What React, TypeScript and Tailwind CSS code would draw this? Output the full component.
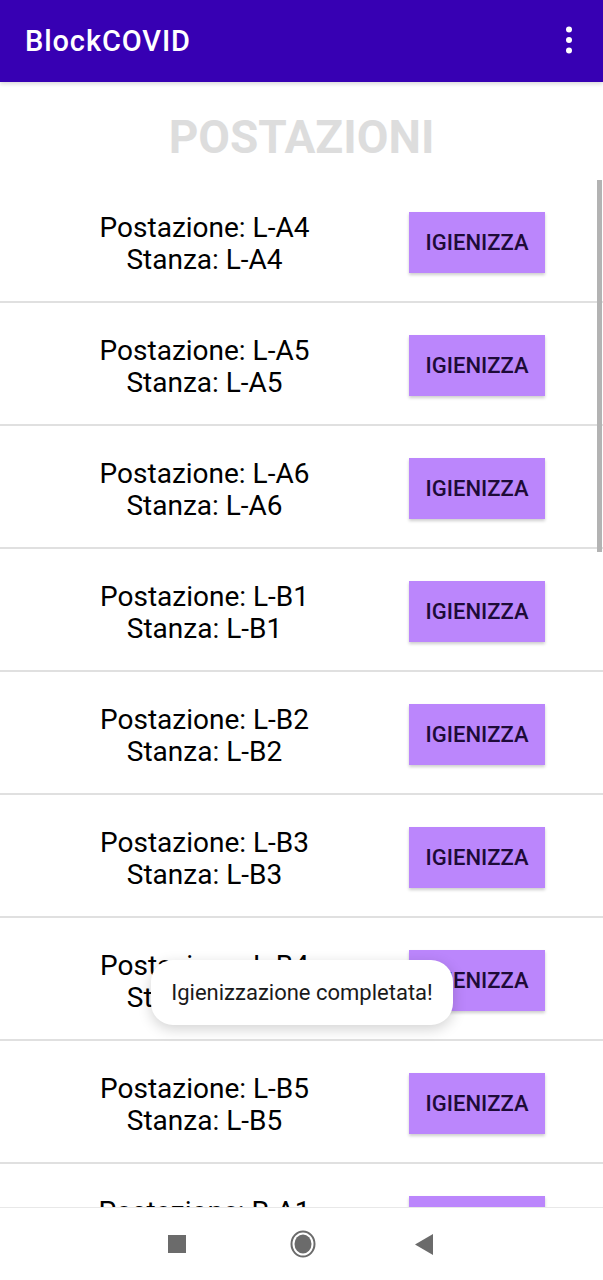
import React from "react";

const rows = ["L-A4", "L-A5", "L-A6", "L-B1", "L-B2", "L-B3", "L-B4", "L-B5", "R-A1"];

export default function App() {
  return (
    <div
      className="relative w-[603px] h-[1280px] bg-white overflow-hidden flex flex-col"
      style={{ fontFamily: "Roboto, 'Noto Sans', sans-serif" }}
    >
      <header className="h-[82px] shrink-0 bg-[#3700b3] flex items-center justify-between pl-[25px] pr-[30px] shadow-[0_2px_4px_rgba(0,0,0,0.15)] z-10">
        <span className="text-white text-[29px] font-medium tracking-[0.9px] leading-none">BlockCOVID</span>
        <svg width="8" height="28" viewBox="0 0 8 28" className="mt-[-2px]">
          <circle cx="4" cy="3.5" r="3" fill="white" />
          <circle cx="4" cy="14" r="3" fill="white" />
          <circle cx="4" cy="24.5" r="3" fill="white" />
        </svg>
      </header>
      <main className="relative flex-1 overflow-hidden flex flex-col">
        <h1 className="h-[98px] shrink-0 flex items-center justify-center text-[#dddddd] text-[46px] font-bold pt-[12px] leading-none">
          POSTAZIONI
        </h1>
        <div className="flex flex-col">
          {rows.map((r) => (
            <div key={r} className="h-[123px] shrink-0 flex items-center pt-[3px] border-b-2 border-[#e0e0e0]">
              <div className="w-[409px] flex flex-col items-center pt-[4px] text-black text-[28px] leading-[32px]">
                <span>Postazione: {r}</span>
                <span>Stanza: {r}</span>
              </div>
              <button className="w-[136px] h-[61px] bg-[#bb86fc] text-[#1e0b38] text-[22px] font-medium shadow-[0_2px_3px_rgba(0,0,0,0.2)]">
                IGIENIZZA
              </button>
            </div>
          ))}
        </div>
        <div className="absolute right-[1px] top-[98px] w-[5px] h-[372px] bg-[#b3b3b3]" />
        <div className="absolute left-[151px] top-[878px] w-[302px] h-[65px] rounded-[22px] bg-white shadow-[0_4px_14px_rgba(0,0,0,0.18)] flex items-center justify-center text-[22px] text-[#1a1a1a]">
          Igienizzazione completata!
        </div>
      </main>
      <nav className="h-[73px] shrink-0 bg-white border-t border-[#e8e8e8] flex items-center">
        <div className="ml-[168px] w-[18px] h-[18px] bg-[#6b6b6b]" />
        <svg className="ml-[104px]" width="26" height="28" viewBox="0 0 26 28">
          <ellipse cx="13" cy="14" rx="11.5" ry="12.5" fill="none" stroke="#6b6b6b" strokeWidth="2" />
          <ellipse cx="13" cy="14" rx="8.5" ry="9.5" fill="#6b6b6b" />
        </svg>
        <svg className="ml-[99px]" width="18" height="21" viewBox="0 0 18 21">
          <polygon points="18,0 18,21 0,10.5" fill="#6b6b6b" />
        </svg>
      </nav>
    </div>
  );
}
